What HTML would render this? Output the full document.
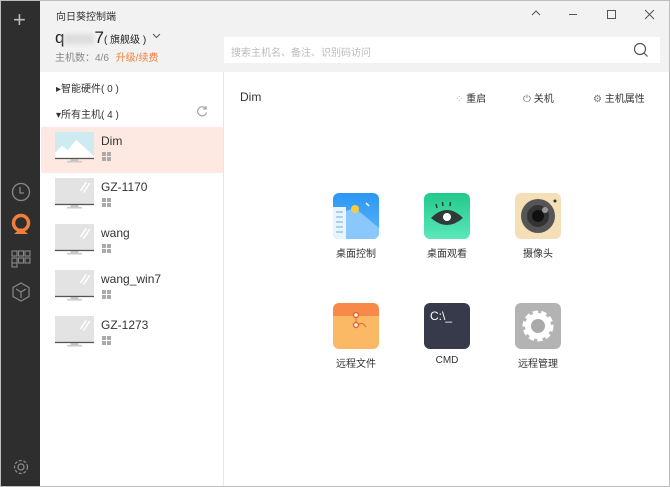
<!DOCTYPE html><html><head><meta charset="utf-8"><style>
*{margin:0;padding:0;box-sizing:border-box}
body{width:670px;height:487px;overflow:hidden;font-family:"Liberation Sans","Noto Sans CJK SC",sans-serif;background:#fff;position:relative;font-size:12px;color:#333}
.abs{position:absolute}
.frame{position:absolute;left:0;top:0;width:670px;height:487px;border:1px solid #bdbdbd;pointer-events:none}
.side{left:0;top:0;width:40px;height:487px;background:#2e2e2e}
.head{left:40px;top:0;width:630px;height:72px;background:#f2f2f2}
.list{left:40px;top:72px;width:184px;height:415px;background:#fff;border-right:1px solid #e6e6e6}
.row{position:absolute;left:41px;width:182px;height:46px}
.mon{position:absolute;left:14px;top:5px;width:39px;height:31px}
.name{position:absolute;left:60px;top:7px;font-size:12px;color:#333}
.win{position:absolute;left:61px;top:25px;width:9px;height:9px}
.tile{position:absolute;width:46px;height:46px;border-radius:6px;overflow:hidden}
.lbl{position:absolute;width:80px;text-align:center;font-size:10px;color:#333}
</style></head><body>
<div class="abs side"></div>
<div class="abs" style="left:13px;top:9px;color:#bbb;font-size:22px;font-weight:200;line-height:22px">+</div>
<svg class="abs" style="left:11px;top:182px" width="20" height="20"><circle cx="10" cy="10" r="8.5" fill="none" stroke="#888" stroke-width="1.3"/><path d="M9 5v6h4" fill="none" stroke="#888" stroke-width="1.3"/></svg>
<svg class="abs" style="left:10px;top:213px" width="22" height="22"><circle cx="11" cy="10" r="7.5" fill="none" stroke="#f07f3c" stroke-width="3.5"/><path d="M4 21l7-6 7 6z" fill="#f07f3c"/></svg>
<svg class="abs" style="left:11px;top:250px" width="20" height="18" fill="none" stroke="#888" stroke-width="1.1"><rect x="1" y="1" width="5" height="5"/><rect x="7.5" y="1" width="5" height="5"/><rect x="14" y="1" width="5" height="5"/><rect x="1" y="8" width="5" height="5"/><rect x="7.5" y="8" width="5" height="5"/><rect x="14" y="8" width="5" height="5"/><rect x="1" y="13" width="5" height="4"/></svg>
<svg class="abs" style="left:11px;top:282px" width="20" height="20" fill="none" stroke="#888" stroke-width="1.2"><path d="M10 1l8 4.5v9L10 19l-8-4.5v-9z M5 7l5 3 5-3 M10 10v6"/></svg>
<svg class="abs" style="left:12px;top:458px" width="18" height="18" fill="none" stroke="#888" stroke-width="1.3"><circle cx="9" cy="9" r="3"/><circle cx="9" cy="9" r="6.5" stroke-dasharray="3 1.7"/></svg>
<div class="abs head"></div>
<div class="abs" style="left:56px;top:8px;font-size:10px;color:#333">向日葵控制端</div>
<div class="abs" style="left:55px;top:28px;font-size:17px;color:#222;white-space:nowrap">q<span style="display:inline-block;width:30px;height:10px;background:#ddd;filter:blur(2px);vertical-align:middle"></span>7<span style="font-size:10px">( 旗舰级 )</span></div>
<svg class="abs" style="left:152px;top:33px" width="9" height="6"><path d="M1 1l3.5 3.5L8 1" fill="none" stroke="#555"/></svg>
<div class="abs" style="left:55px;top:49px;font-size:10px;color:#888">主机数：4/6 <span style="color:#f07f3c;margin-left:4px">升级/续费</span></div>
<svg class="abs" style="left:530px;top:9px" width="12" height="8"><path d="M2 6l4-4 4 4" fill="none" stroke="#555"/></svg>
<div class="abs" style="left:569px;top:14px;width:8px;height:1px;background:#555"></div>
<div class="abs" style="left:607px;top:10px;width:9px;height:9px;border:1px solid #555"></div>
<svg class="abs" style="left:644px;top:9px" width="11" height="11"><path d="M1 1l9 9M10 1l-9 9" stroke="#555"/></svg>
<div class="abs" style="left:224px;top:37px;width:436px;height:26px;background:#fff"></div>
<div class="abs" style="left:231px;top:44px;font-size:10px;color:#bbb">搜索主机名、备注、识别码访问</div>
<svg class="abs" style="left:633px;top:42px" width="16" height="16" fill="none" stroke="#555" stroke-width="1.2"><circle cx="7" cy="7" r="5.5"/><path d="M11 11l3.5 3.5"/></svg>
<div class="abs list"></div>
<div class="abs" style="left:56px;top:80px;font-size:10px;color:#333">▸智能硬件( 0 )</div>
<div class="abs" style="left:56px;top:106px;font-size:10px;color:#333">▾所有主机( 4 )</div>
<svg class="abs" style="left:196px;top:105px" width="12" height="12" fill="none" stroke="#999" stroke-width="1.1"><path d="M10 4A4.5 4.5 0 1 0 10.5 7.5M10 1v3H7"/></svg>
<div class="row" style="top:127px;background:#fde9e2"><svg class="mon" viewBox="0 0 55 36" preserveAspectRatio="none"><rect width="55" height="31" fill="#cdebf0"/><path d="M0 24l10-8 8 5 12-12 25 19v3H0z" fill="#fff"/><rect y="30" width="55" height="1.5" fill="#555"/><rect x="22" y="31.5" width="11" height="2" fill="#bbb"/><rect x="17" y="33.5" width="21" height="2" fill="#ccc"/></svg><div class="name">Dim</div><svg class="win" viewBox="0 0 9 9" fill="#aaa"><rect width="4" height="4"/><rect x="5" width="4" height="4"/><rect y="5" width="4" height="4"/><rect x="5" y="5" width="4" height="4"/></svg></div>
<div class="row" style="top:173px"><svg class="mon" viewBox="0 0 55 36" preserveAspectRatio="none"><rect width="55" height="31" fill="#e3e3e3"/><path d="M36 15l8-10M40 17l9-11" stroke="#fff" stroke-width="2"/><rect y="30" width="55" height="1.5" fill="#555"/><rect x="22" y="31.5" width="11" height="2" fill="#bbb"/><rect x="17" y="33.5" width="21" height="2" fill="#ccc"/></svg><div class="name">GZ-1170</div><svg class="win" viewBox="0 0 9 9" fill="#aaa"><rect width="4" height="4"/><rect x="5" width="4" height="4"/><rect y="5" width="4" height="4"/><rect x="5" y="5" width="4" height="4"/></svg></div>
<div class="row" style="top:219px"><svg class="mon" viewBox="0 0 55 36" preserveAspectRatio="none"><rect width="55" height="31" fill="#e3e3e3"/><path d="M36 15l8-10M40 17l9-11" stroke="#fff" stroke-width="2"/><rect y="30" width="55" height="1.5" fill="#555"/><rect x="22" y="31.5" width="11" height="2" fill="#bbb"/><rect x="17" y="33.5" width="21" height="2" fill="#ccc"/></svg><div class="name">wang</div><svg class="win" viewBox="0 0 9 9" fill="#aaa"><rect width="4" height="4"/><rect x="5" width="4" height="4"/><rect y="5" width="4" height="4"/><rect x="5" y="5" width="4" height="4"/></svg></div>
<div class="row" style="top:265px"><svg class="mon" viewBox="0 0 55 36" preserveAspectRatio="none"><rect width="55" height="31" fill="#e3e3e3"/><path d="M36 15l8-10M40 17l9-11" stroke="#fff" stroke-width="2"/><rect y="30" width="55" height="1.5" fill="#555"/><rect x="22" y="31.5" width="11" height="2" fill="#bbb"/><rect x="17" y="33.5" width="21" height="2" fill="#ccc"/></svg><div class="name">wang_win7</div><svg class="win" viewBox="0 0 9 9" fill="#aaa"><rect width="4" height="4"/><rect x="5" width="4" height="4"/><rect y="5" width="4" height="4"/><rect x="5" y="5" width="4" height="4"/></svg></div>
<div class="row" style="top:311px"><svg class="mon" viewBox="0 0 55 36" preserveAspectRatio="none"><rect width="55" height="31" fill="#e3e3e3"/><path d="M36 15l8-10M40 17l9-11" stroke="#fff" stroke-width="2"/><rect y="30" width="55" height="1.5" fill="#555"/><rect x="22" y="31.5" width="11" height="2" fill="#bbb"/><rect x="17" y="33.5" width="21" height="2" fill="#ccc"/></svg><div class="name">GZ-1273</div><svg class="win" viewBox="0 0 9 9" fill="#aaa"><rect width="4" height="4"/><rect x="5" width="4" height="4"/><rect y="5" width="4" height="4"/><rect x="5" y="5" width="4" height="4"/></svg></div>
<div class="abs" style="left:240px;top:90px;font-size:12px;color:#333">Dim</div>
<div class="abs" style="left:455px;top:90px;font-size:10px;color:#333"><span style="color:#aaa">⁘</span> 重启</div>
<div class="abs" style="left:523px;top:90px;font-size:10px;color:#333"><span style="color:#777">⏻</span> 关机</div>
<div class="abs" style="left:593px;top:90px;font-size:10px;color:#333"><span style="color:#777">⚙</span> 主机属性</div>
<div class="tile" style="left:333px;top:193px;background:linear-gradient(#2a97f5,#5fb4fa)"><svg width="46" height="46"><path d="M0 46V22l22-7 24 20v11z" fill="#8ac8fb"/><rect x="0" y="14" width="13" height="32" fill="#eaf4fd"/><g stroke="#6aaee8"><path d="M3 19h7M3 24h7M3 29h7M3 34h7M3 39h7"/></g><circle cx="22" cy="16" r="4" fill="#f9cc3c"/><path d="M33 10l3 3" stroke="#fff" stroke-width="1.5"/></svg></div>
<div class="tile" style="left:424px;top:193px;background:linear-gradient(#22c98a,#5ae8bb)"><svg width="46" height="46"><path d="M7 25q16-16 32 0q-16 14-32 0z" fill="#2f3a3a"/><circle cx="23" cy="24" r="4" fill="#fff"/><path d="M13 15l-1-4M19 13l-.5-4M26 13l.5-4" stroke="#2f3a3a" stroke-width="1.5"/></svg></div>
<div class="tile" style="left:515px;top:193px;background:#f4dfb7"><svg width="46" height="46"><circle cx="23" cy="23" r="17" fill="#555"/><circle cx="23" cy="23" r="11" fill="#333"/><circle cx="23" cy="23" r="6" fill="#111"/><circle cx="30" cy="17" r="3" fill="#999"/><circle cx="40" cy="8" r="1.5" fill="#333"/></svg></div>
<div class="tile" style="left:333px;top:303px;background:#fcb965"><div style="height:13px;background:#f78a4b"></div><svg class="abs" style="left:0;top:0" width="46" height="46"><circle cx="23" cy="12" r="2.5" fill="#fff" stroke="#e8652a" stroke-width="1.5"/><path d="M23 14v6" stroke="#e8652a"/><circle cx="23" cy="22" r="2.5" fill="#fff" stroke="#e8652a" stroke-width="1.5"/><path d="M25 22q4-4 8 2" fill="none" stroke="#e8652a"/></svg></div>
<div class="tile" style="left:424px;top:303px;background:#363a4a"><div style="position:absolute;left:6px;top:6px;color:#fff;font-size:12px;font-family:'Liberation Sans'">C:\_</div></div>
<div class="tile" style="left:515px;top:303px;background:#b3b3b3"><svg width="46" height="46"><circle cx="23" cy="23" r="13" fill="#fff" stroke="#fff" stroke-width="5" stroke-dasharray="5 3"/><circle cx="23" cy="23" r="7" fill="#aaa"/></svg></div>
<div class="lbl" style="left:316px;top:245px">桌面控制</div>
<div class="lbl" style="left:407px;top:245px">桌面观看</div>
<div class="lbl" style="left:498px;top:245px">摄像头</div>
<div class="lbl" style="left:316px;top:355px">远程文件</div>
<div class="lbl" style="left:407px;top:355px">CMD</div>
<div class="lbl" style="left:498px;top:355px">远程管理</div>
<div class="frame"></div>
</body></html>
